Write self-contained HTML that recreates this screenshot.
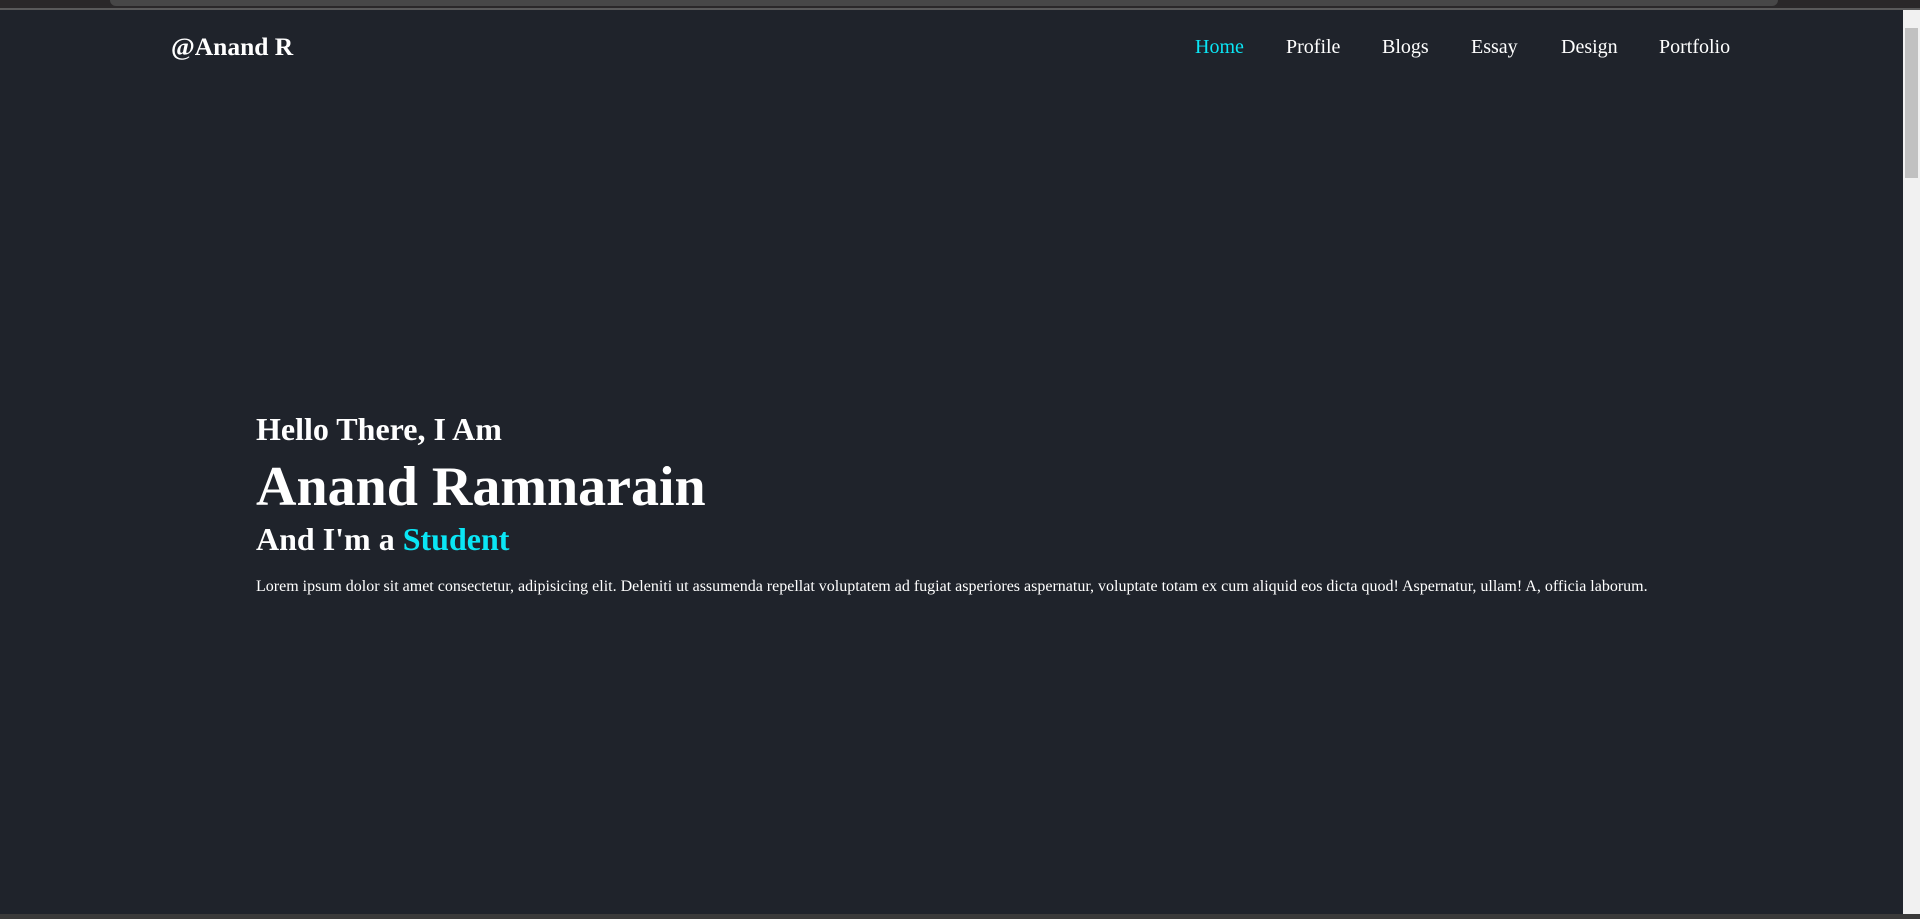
<!DOCTYPE html>
<html><head><meta charset="utf-8">
<style>
html,body{margin:0;padding:0;width:1920px;height:919px;overflow:hidden;background:#1f232b;font-family:"Liberation Serif",serif;color:#fff}
.chrome{position:absolute;left:0;top:0;width:1920px;height:10px;background:#2a2829;border-bottom:2px solid #5a5a5a;box-sizing:border-box}
.chrome .bar{position:absolute;left:110px;top:0;width:1668px;height:6px;background:#474747;border-radius:0 0 8px 8px}
.sb{position:absolute;right:0;top:10px;width:17px;height:905px;background:#f1f1f1}
.sb .th{position:absolute;left:2px;top:18px;width:13px;height:150px;background:#c1c1c1}
.bot{position:absolute;left:0;top:914px;width:1920px;height:5px;background:#3a3a3a}
.logo{position:absolute;left:171px;top:32px;font-size:25.5px;font-weight:bold}
.nav{position:absolute;top:36px;font-size:20px}
.t{position:absolute;left:256px;white-space:nowrap;font-weight:bold}
</style></head><body>
<div class="chrome"><div class="bar"></div></div>
<div class="logo">@Anand R</div>
<div class="nav" style="left:1195px;color:#0ae6f5">Home</div>
<div class="nav" style="left:1286px">Profile</div>
<div class="nav" style="left:1382px">Blogs</div>
<div class="nav" style="left:1471px">Essay</div>
<div class="nav" style="left:1561px">Design</div>
<div class="nav" style="left:1659px">Portfolio</div>
<div class="t" style="top:411px;font-size:32px">Hello There, I Am</div>
<div class="t" style="top:455px;font-size:56px">Anand Ramnarain</div>
<div class="t" style="top:521px;font-size:32px">And I'm a <span style="color:#0ae6f5">Student</span></div>
<div class="t" style="top:578px;font-size:16px;font-weight:normal">Lorem ipsum dolor sit amet consectetur, adipisicing elit. Deleniti ut assumenda repellat voluptatem ad fugiat asperiores aspernatur, voluptate totam ex cum aliquid eos dicta quod! Aspernatur, ullam! A, officia laborum.</div>
<div class="sb"><div class="th"></div></div>
<div class="bot"></div>
</body></html>
